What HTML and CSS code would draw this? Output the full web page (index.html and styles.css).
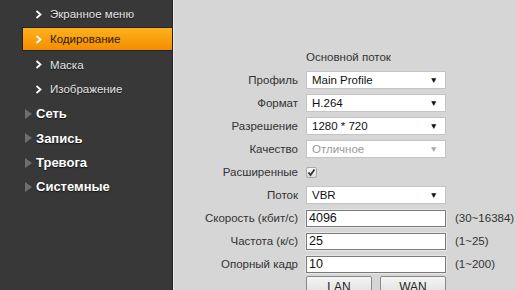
FILE: index.html
```html
<!DOCTYPE html>
<html lang="ru">
<head>
    <meta charset="UTF-8">
    <title>Кодирование</title>
    <link rel="stylesheet" href="styles.css">
</head>
<body>
    <div class="page">
        <div class="sidebar">
            <div class="sub-item"><svg class="chev" width="7" height="9" viewBox="0 0 7 9"><polyline points="1.5,1 5.5,4.5 1.5,8" /></svg>Экранное меню</div>
            <div class="sub-item active"><svg class="chev" width="7" height="9" viewBox="0 0 7 9"><polyline points="1.5,1 5.5,4.5 1.5,8" /></svg>Кодирование</div>
            <div class="sub-item"><svg class="chev" width="7" height="9" viewBox="0 0 7 9"><polyline points="1.5,1 5.5,4.5 1.5,8" /></svg>Маска</div>
            <div class="sub-item"><svg class="chev" width="7" height="9" viewBox="0 0 7 9"><polyline points="1.5,1 5.5,4.5 1.5,8" /></svg>Изображение</div>
            <div class="main-item"><svg class="tri" width="7" height="10" viewBox="0 0 7 10"><polygon points="0,0 7,5 0,10" /></svg>Сеть</div>
            <div class="main-item"><svg class="tri" width="7" height="10" viewBox="0 0 7 10"><polygon points="0,0 7,5 0,10" /></svg>Запись</div>
            <div class="main-item"><svg class="tri" width="7" height="10" viewBox="0 0 7 10"><polygon points="0,0 7,5 0,10" /></svg>Тревога</div>
            <div class="main-item"><svg class="tri" width="7" height="10" viewBox="0 0 7 10"><polygon points="0,0 7,5 0,10" /></svg>Системные</div>
        </div>

        <div class="content">
            <div class="form">
                <div></div>
                <div class="stream-title">Основной поток</div>
                <div></div>

                <div class="label">Профиль</div>
                <div class="select"><span>Main Profile</span><span class="arrow">▼</span></div>
                <div></div>

                <div class="label">Формат</div>
                <div class="select"><span>H.264</span><span class="arrow">▼</span></div>
                <div></div>

                <div class="label">Разрешение</div>
                <div class="select"><span>1280 * 720</span><span class="arrow">▼</span></div>
                <div></div>

                <div class="label">Качество</div>
                <div class="select disabled"><span>Отличное</span><span class="arrow">▼</span></div>
                <div></div>

                <div class="label">Расширенные</div>
                <div><span class="checkbox"><svg width="9" height="9" viewBox="0 0 9 9"><polyline points="1.5,4.5 3.5,7 7.5,1.5" /></svg></span></div>
                <div></div>

                <div class="label">Поток</div>
                <div class="select"><span>VBR</span><span class="arrow">▼</span></div>
                <div></div>

                <div class="label">Скорость (кбит/с)</div>
                <div class="text-input">4096</div>
                <div class="range">(30~16384)</div>

                <div class="label">Частота (к/с)</div>
                <div class="text-input">25</div>
                <div class="range">(1~25)</div>

                <div class="label">Опорный кадр</div>
                <div class="text-input">10</div>
                <div class="range">(1~200)</div>

                <div></div>
                <div class="buttons">
                    <button class="btn">LAN</button>
                    <button class="btn">WAN</button>
                </div>
                <div></div>
            </div>
        </div>
    </div>
</body>
</html>
```

FILE: styles.css
```css
body {
    margin: 0;
    font-family: "Liberation Sans", Arial, sans-serif;
    overflow: hidden;
}

.page {
    display: flex;
    height: 290px;
}

.sidebar {
    width: 172px;
    background-color: #383838;
    border-right: 1px solid #222222;
    box-shadow: 1px 0 0 #ececec;
    padding-top: 2px;
    flex-shrink: 0;
}

.sub-item {
    display: flex;
    align-items: center;
    height: 24.4px;
    padding-left: 35px;
    color: #e4e4e4;
    font-size: 11.5px;
    text-shadow: 0 1px 1px rgba(0, 0, 0, 0.6);
}

.sub-item .chev {
    margin-right: 8px;
    fill: none;
    stroke: #ffffff;
    stroke-width: 1.8;
}

.sub-item.active {
    margin-left: 22px;
    padding-left: 12px;
    height: 22px;
    margin-top: 1px;
    margin-bottom: 1.4px;
    border: 1px solid #222222;
    border-right: none;
    background: linear-gradient(#ffb21c, #f48d00);
    color: #2a1800;
    text-shadow: none;
}

.main-item {
    display: flex;
    align-items: center;
    height: 24.4px;
    padding-left: 25px;
    color: #ffffff;
    font-size: 13px;
    font-weight: bold;
    text-shadow: 0 1px 1px rgba(0, 0, 0, 0.7);
}

.main-item .tri {
    margin-right: 4px;
    fill: #6e6e6e;
}

.content {
    flex: 1;
    background-color: #d6d6d6;
    margin-left: 1px;
}

.form {
    display: grid;
    grid-template-columns: 125px 140px auto;
    grid-auto-rows: 18px;
    column-gap: 7px;
    row-gap: 5px;
    padding-top: 48px;
    font-size: 11.5px;
    color: #333333;
    align-items: center;
}

.form > .range {
    margin-left: 2px;
}

.label {
    text-align: right;
    padding-right: 1px;
}

.stream-title {
    color: #333333;
}

.select {
    display: flex;
    justify-content: space-between;
    align-items: center;
    height: 18px;
    box-sizing: border-box;
    background-color: #ffffff;
    border: 1px solid #c4c4c4;
    padding: 0 7px 0 5px;
    color: #111111;
}

.select .arrow {
    font-size: 8.5px;
    color: #111111;
}

.select.disabled {
    color: #999999;
}

.select.disabled .arrow {
    color: #aaaaaa;
}

.checkbox {
    display: inline-flex;
    align-items: center;
    justify-content: center;
    width: 11px;
    height: 11px;
    box-sizing: border-box;
    border: 1px solid #a8a8a8;
    border-radius: 2px;
    background: linear-gradient(#f6f6f6, #dcdcdc);
    vertical-align: middle;
}

.checkbox polyline {
    fill: none;
    stroke: #333333;
    stroke-width: 1.8;
}

.text-input {
    height: 17px;
    box-sizing: border-box;
    background-color: #ffffff;
    border: 1px solid #7a7a7a;
    box-shadow: 0 0 0 1px #e6e6e6;
    padding-left: 2px;
    color: #111111;
    font-size: 12.5px;
    line-height: 15px;
}

.range {
    color: #333333;
    font-size: 11.5px;
}

.buttons {
    display: flex;
    gap: 8px;
    align-self: start;
    margin-top: -2px;
}

.btn {
    width: 72px;
    height: 22px;
    border: 1px solid #8a8a8a;
    border-radius: 2px;
    background: linear-gradient(#f4f4f4, #dedede);
    font-family: "Liberation Sans", Arial, sans-serif;
    font-size: 12px;
    color: #222222;
    padding: 0;
}
```
